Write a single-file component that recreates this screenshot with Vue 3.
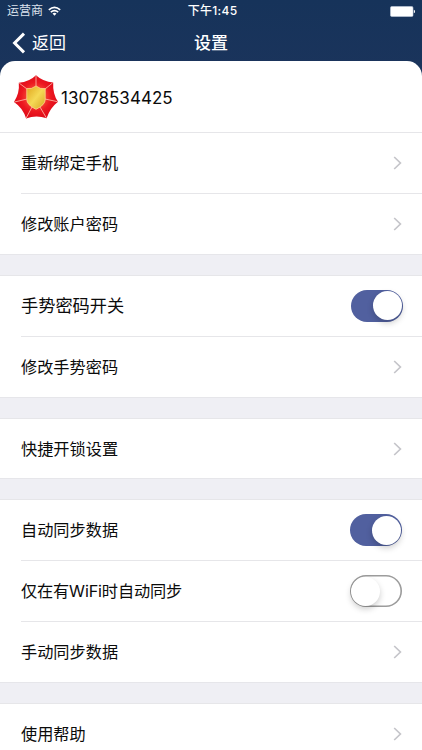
<script setup>
const groups = [
  [
    { label: '重新绑定手机', type: 'link' },
    { label: '修改账户密码', type: 'link' },
  ],
  [
    { label: '手势密码开关', type: 'switch', on: true, large: true },
    { label: '修改手势密码', type: 'link' },
  ],
  [{ label: '快捷开锁设置', type: 'link', single: true }],
  [
    { label: '自动同步数据', type: 'switch', on: true },
    { label: '仅在有WiFi时自动同步', type: 'switch', on: false, tight: true },
    { label: '手动同步数据', type: 'link' },
  ],
  [{ label: '使用帮助', type: 'link' }],
]
</script>

<template>
  <div class="screen">
    <header class="header">
      <div class="status">
        <div class="carrier">
          <span>运营商</span>
          <svg class="wifi" viewBox="0 0 13 10" width="13" height="10">
            <path d="M.8 3.9Q6.5-1 12.2 3.9M2.8 6.2Q6.5 3 10.2 6.2" fill="none" stroke="#fff" stroke-width="1.6" />
            <path d="M4.5 7.6Q6.5 5.9 8.5 7.6L6.5 9.7Z" fill="#fff" />
          </svg>
        </div>
        <div class="time">下午1:45</div>
        <div class="battery-wrap">
          <svg viewBox="0 0 26 11" width="26" height="11">
            <rect x="0.5" y="0.5" width="22.5" height="10" rx="1.3" fill="#fff" stroke="#c3cddc" stroke-width="0.6" />
            <path d="M23.8 3.8Q25 4 25 5.5T23.8 7.2Z" fill="#fff" />
          </svg>
        </div>
      </div>
      <nav class="nav">
        <div class="back">
          <svg viewBox="0 0 14 22" width="14" height="22">
            <path d="M12 1.6L2.6 11L12 20.4" fill="none" stroke="#fff" stroke-width="3" />
          </svg>
          <span>返回</span>
        </div>
        <h1 class="title">设置</h1>
        <div></div>
      </nav>
    </header>
    <main class="sheet">
      <div class="profile">
        <svg class="badge" viewBox="0 0 44 44" width="44" height="44">
          <defs>
            <radialGradient id="ruby" cx="50%" cy="50%" r="52%">
              <stop offset="0.3" stop-color="#f8503a" />
              <stop offset="0.65" stop-color="#ec1820" />
              <stop offset="1" stop-color="#de0818" />
            </radialGradient>
            <linearGradient id="gold" x1="0" y1="0" x2="1" y2="1">
              <stop offset="0" stop-color="#e0a51d" />
              <stop offset="0.5" stop-color="#f5d956" />
              <stop offset="1" stop-color="#d7a421" />
            </linearGradient>
          </defs>
          <path d="M22 .3Q29 6.8 39.2 7.4Q38.5 18.5 44 26.8Q36 33 32.6 43.3Q22 39.8 12.1 43.6Q9 33 0 27Q5.8 18 4.8 7.8Q15.5 6.8 22 .3Z" fill="url(#ruby)" />
          <path d="M22 1V11M38.5 8L31 14M43.5 26.7L31 24M32.3 42.8L26 32M12.2 43L18 32M.6 27L13 24M5.3 8.2L13 14" stroke="#ffc4b0" stroke-width="0.8" />
          <path d="M22 11Q26.5 14.5 31.2 13.6V24.5Q31.2 30 22 34.3Q12.8 30 12.8 24.5V13.6Q17.5 14.5 22 11Z" fill="url(#gold)" stroke="#ffd890" stroke-width="0.8" />
        </svg>
        <span class="phone">13078534425</span>
      </div>
      <section v-for="(group, i) in groups" :key="i" class="group">
        <div v-for="item in group" :key="item.label" class="row" :class="{ single: item.single }">
          <span class="label" :class="{ large: item.large, tight: item.tight }">{{ item.label }}</span>
          <svg v-if="item.type === 'link'" class="chevron" viewBox="0 0 9 14" width="9" height="14">
            <path d="M1.2 1L7.4 7L1.2 13" fill="none" stroke="#c5c5ca" stroke-width="1.7" />
          </svg>
          <div v-else class="switch" :class="{ on: item.on, large: item.large }">
            <div class="knob"></div>
          </div>
        </div>
        <div class="gap"></div>
      </section>
    </main>
  </div>
</template>

<style>
body {
  margin: 0;
  overflow: hidden;
}
</style>

<style scoped>
.screen {
  width: 422px;
  height: 750px;
  overflow: hidden;
  background: linear-gradient(#16335a, #1b345c 80px);
  font-family: Inter, "Noto Sans CJK SC", sans-serif;
  color: #0b0b0b;
}
.header {
  height: 61px;
  color: #fff;
}
.status {
  display: grid;
  grid-template-columns: 1fr auto 1fr;
  height: 22px;
  align-items: center;
  padding: 0 6px;
  font-size: 12px;
  line-height: 22px;
}
.carrier {
  display: flex;
  align-items: center;
  gap: 6px;
  padding-left: 1px;
  color: #dce3ed;
}
.wifi {
  margin: -1px 0 0 -1px;
}
.time {
  font-weight: 500;
  letter-spacing: 0.3px;
  padding-left: 3px;
}
.battery-wrap {
  display: flex;
  justify-content: flex-end;
}
.nav {
  display: grid;
  grid-template-columns: 1fr auto 1fr;
  align-items: center;
  height: 42px;
  padding: 0 12px;
}
.back {
  display: flex;
  align-items: center;
  gap: 6px;
  font-size: 17px;
  line-height: 24px;
}
.title {
  margin: 0;
  font-size: 17px;
  line-height: 24px;
  font-weight: 500;
}
.sheet {
  background: #fff;
  border-radius: 15px 15px 0 0;
}
.profile {
  display: flex;
  align-items: center;
  height: 71px;
  padding-left: 14px;
  gap: 3px;
}
.badge {
  display: block;
}
.phone {
  padding-top: 2px;
  font-size: 17px;
  letter-spacing: 0.05px;
}
.gap {
  box-sizing: border-box;
  height: 21px;
  border-top: 1px solid #e6e6ea;
  background: #efeff4;
}
.row {
  display: flex;
  align-items: center;
  justify-content: space-between;
  box-sizing: border-box;
  height: 61px;
  margin-left: 21px;
  padding-right: 20px;
  border-top: 1px solid #e6e6e9;
}
.row:first-child {
  margin-left: 0;
  padding-left: 21px;
}
.row.single {
  height: 60px;
}
.label {
  font-size: 16.2px;
  line-height: 24px;
}
.label.large {
  font-size: 17.2px;
}
.label.tight {
  letter-spacing: -0.15px;
}
.switch {
  box-sizing: border-box;
  display: flex;
  align-items: center;
  width: 52px;
  height: 32px;
  padding: 1px;
  border-radius: 16px;
  box-shadow: inset 0 0 0 1.6px #9c9c9c;
}
.switch.on {
  justify-content: flex-end;
  background: #51609f;
  box-shadow: none;
}
.switch.large {
  margin: -1px -1px 0 0;
}
.knob {
  width: 29px;
  height: 29px;
  border-radius: 50%;
  background: #fff;
  box-shadow: 0 3px 6px rgba(0, 0, 0, 0.2);
}
</style>
